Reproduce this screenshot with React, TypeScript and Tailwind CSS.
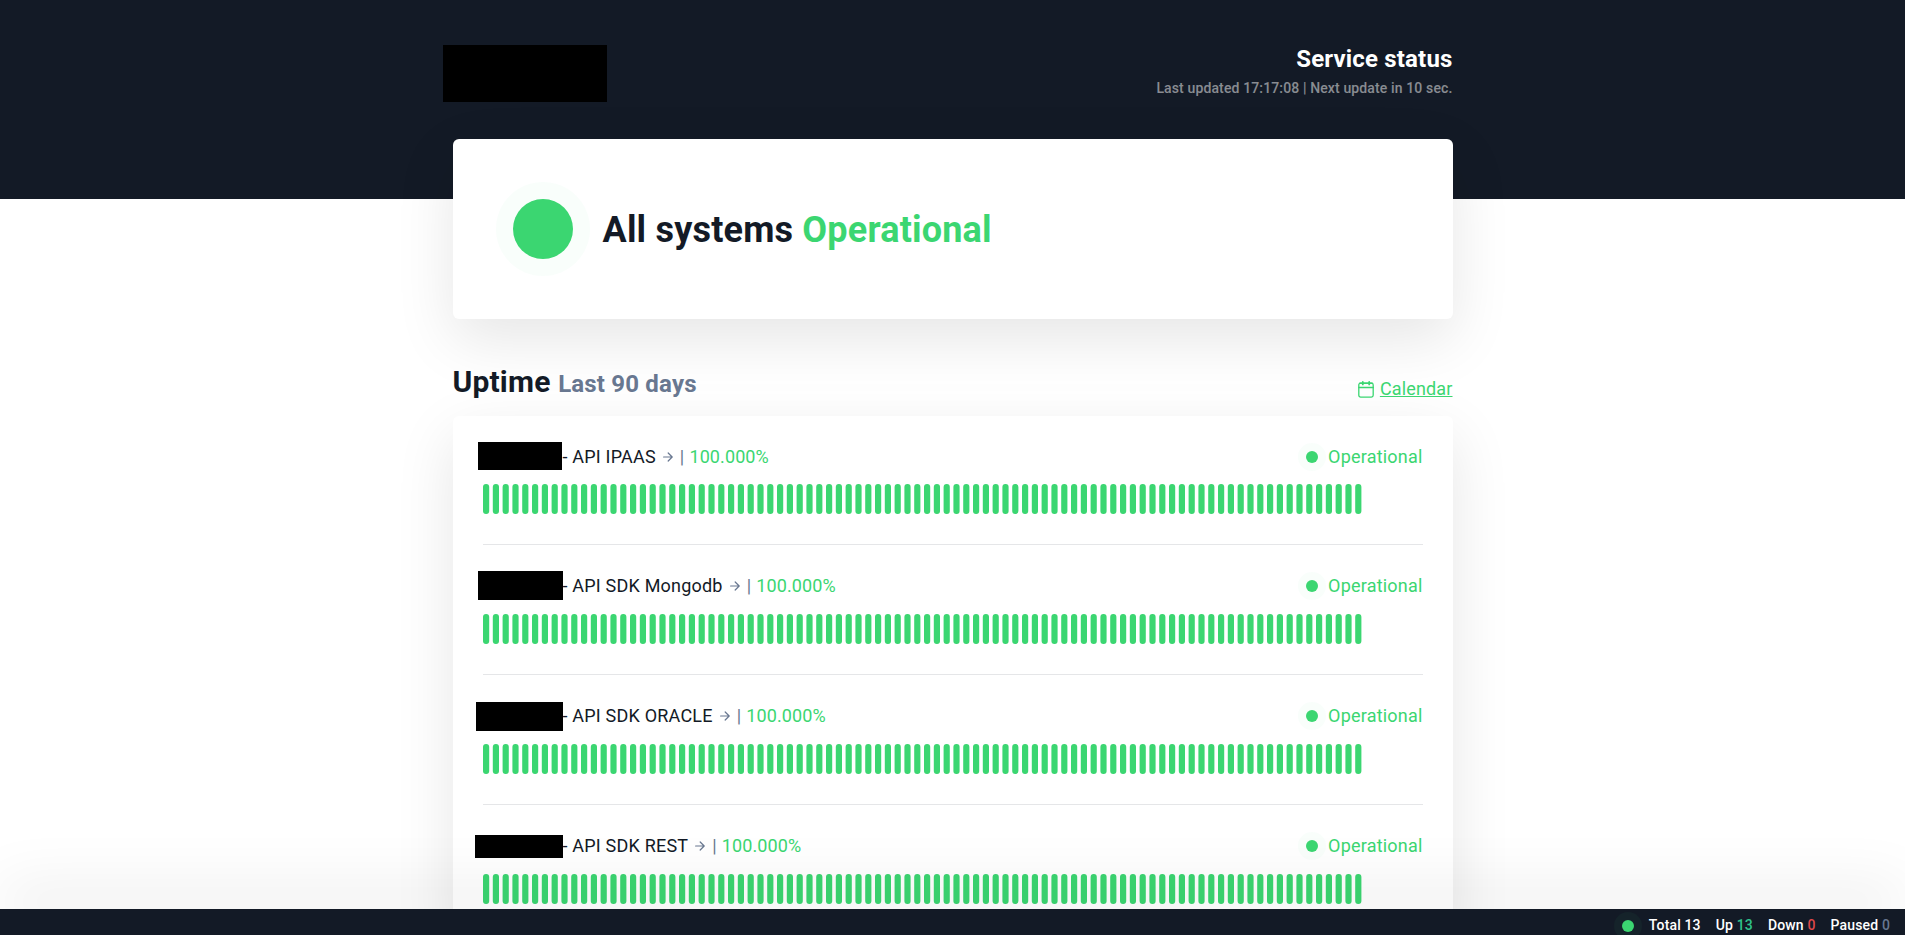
import clsx from "clsx";

interface Monitor {
  name: string;
  ratio: string;
  // Size of the block that hides the customer's name.
  mask: string;
}

const monitors: Monitor[] = [
  {
    name: "API IPAAS",
    ratio: "100.000%",
    mask: "left-[-5px] top-[-4px] w-[84px] h-[28px]",
  },
  {
    name: "API SDK Mongodb",
    ratio: "100.000%",
    mask: "left-[-5px] top-[-4px] w-[85px] h-[29px]",
  },
  {
    name: "API SDK ORACLE",
    ratio: "100.000%",
    mask: "left-[-7px] top-[-3px] w-[87px] h-[29px]",
  },
  {
    name: "API SDK REST",
    ratio: "100.000%",
    mask: "left-[-8px] top-0 w-[88px] h-[23px]",
  },
];

const DAYS = 90;
const BAR_STEP = 9.8;

const Dot = ({ className, halo }: { className: string; halo: string }) => (
  <span className={clsx("relative block shrink-0 rounded-full bg-[#3bd671]", className)}>
    <span className={clsx("absolute rounded-full bg-[#3bd671]", halo)} />
  </span>
);

const ArrowIcon = () => (
  <svg
    width="10"
    height="10"
    viewBox="0 0 10 10"
    fill="none"
    stroke="#687790"
    strokeWidth="1.2"
    strokeLinecap="round"
    strokeLinejoin="round"
  >
    <path d="M0.6 5H9.2M5.2 1L9.2 5L5.2 9" />
  </svg>
);

const CalendarIcon = () => (
  <svg
    width="16"
    height="17"
    viewBox="0 0 16 17"
    fill="none"
    stroke="#3bd671"
    strokeWidth="1.3"
    strokeLinecap="round"
    strokeLinejoin="round"
  >
    <rect x="0.8" y="2.2" width="14.4" height="13.9" rx="1.8" />
    <path d="M0.8 6.5H15.2" />
    <path d="M4.8 0.9V3.4M11.2 0.9V3.4" strokeWidth="1.8" />
    <path d="M1.8 2.2H14.2" strokeWidth="1.6" />
  </svg>
);

const UptimeBars = () => (
  <svg width="940" height="30" className="block">
    {Array.from({ length: DAYS }, (_, i) => (
      <rect
        key={i}
        x={i * BAR_STEP}
        width="6.2"
        height="30"
        rx="3"
        fill="#3bd671"
      />
    ))}
  </svg>
);

const MonitorRow = ({ monitor }: { monitor: Monitor }) => (
  <div className="group flex h-[130px] flex-col border-b border-[#e5e6e8] first:-mt-px">
    <div className="flex h-[69px] shrink-0 justify-between pt-[30px] text-lg leading-[21px] tracking-[0.2px] group-first:pt-[31px]">
      <div className="relative flex h-[21px] items-center pl-[80px]">
        <span className={clsx("absolute bg-black", monitor.mask)} />
        <span className="text-[#131a26]">- {monitor.name}</span>
        <span className="ml-[7px] mt-px">
          <ArrowIcon />
        </span>
        <span className="ml-[7px] text-[#687790]">|</span>
        <span className="ml-[5px] tracking-[0.1px] text-[#3bd671]">
          {monitor.ratio}
        </span>
      </div>
      <div className="flex h-[21px] items-center gap-[10px] text-[#3bd671]">
        <Dot className="mt-px size-3" halo="-inset-2 opacity-[0.03]" />
        Operational
      </div>
    </div>
    <UptimeBars />
  </div>
);

const Counter = ({ label, value, color }: { label: string; value: number; color: string }) => (
  <span>
    {label} <span className={color}>{value}</span>
  </span>
);

const App = () => {
  return (
    <div className="flex h-[935px] flex-col overflow-hidden bg-white font-[Roboto,sans-serif]">
      <div className="h-[909px] overflow-hidden">
        <header className="h-[199px] bg-[#131a26]">
          <div className="mx-auto flex h-[139px] w-[1000px] justify-between">
            <div className="-ml-2.5 mt-[45px] h-[57px] w-[164px] bg-black" />
            <div className="pt-[44px] text-right">
              <h1 className="text-2xl leading-[30px] font-bold tracking-[0.17px] text-white">
                Service status
              </h1>
              <p className="mt-[5px] text-sm leading-[18px] font-medium tracking-[0.13px] text-white/50">
                Last updated 17:17:08 | Next update in 10 sec.
              </p>
            </div>
          </div>
        </header>

        <main className="relative mx-auto -mt-[60px] w-[1000px]">
          <section className="flex h-[180px] items-center gap-[30px] rounded-md bg-white pl-[60px] shadow-[0_20px_60px_rgba(0,0,0,0.1)]">
            <Dot className="size-[60px]" halo="-inset-[17px] opacity-[0.03]" />
            <h2 className="pt-[2px] text-4xl leading-[44px] font-bold tracking-[0.19px] text-[#131a26]">
              All systems <span className="text-[#3bd671]">Operational</span>
            </h2>
          </section>

          <div className="flex h-[97px] items-start justify-between">
            <h3 className="pt-[45px] text-[30px] leading-[36px] font-bold tracking-[0.18px] text-[#131a26]">
              Uptime <span className="text-2xl text-[#687790]">Last 90 days</span>
            </h3>
            <a className="flex items-center gap-[6px] pt-[59px] text-lg leading-[21px] tracking-[0.15px] text-[#3bd671]">
              <span className="pt-[2px]">
                <CalendarIcon />
              </span>
              <span className="underline">Calendar</span>
            </a>
          </div>

          <section className="flex flex-col rounded-md bg-white px-[30px] shadow-[0_20px_60px_rgba(0,0,0,0.1)]">
            {monitors.map((monitor) => (
              <MonitorRow key={monitor.name} monitor={monitor} />
            ))}
          </section>
        </main>
      </div>

      <footer className="relative flex h-[26px] items-center justify-end gap-[15px] bg-[#131a26] pr-[15px] text-sm font-medium tracking-[0.15px] text-white shadow-[0_-20px_60px_rgba(0,0,0,0.1)]">
        <Dot className="mt-[8px] size-3" halo="-inset-2 opacity-[0.05]" />
        <div className="flex gap-[15px] pt-[5px] leading-[20px]">
          <Counter label="Total" value={13} color="text-white" />
          <Counter label="Up" value={13} color="text-[#2fc28b]" />
          <Counter label="Down" value={0} color="text-[#df484a]" />
          <Counter label="Paused" value={0} color="text-[#687790]" />
        </div>
      </footer>
    </div>
  );
};

export default App;
